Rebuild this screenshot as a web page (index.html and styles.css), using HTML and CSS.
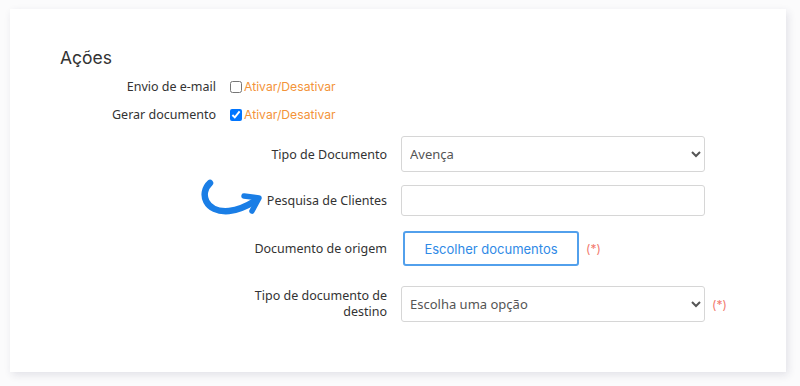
FILE: index.html
```html
<!DOCTYPE html>
<html lang="pt">
<head>
  <meta charset="UTF-8">
  <meta name="viewport" content="width=device-width, initial-scale=1.0">
  <title>Ações</title>
  <link rel="stylesheet" href="styles.css">
</head>
<body>

  <div class="card">
    <h2 class="section-title">Ações</h2>

    <!-- Opções de ativar/desativar -->
    <div class="toggles">
      <span class="label">Envio de e-mail</span>
      <label class="toggle"><input type="checkbox"> Ativar/Desativar</label>

      <span class="label">Gerar documento</span>
      <label class="toggle"><input type="checkbox" checked> Ativar/Desativar</label>
    </div>

    <!-- Campos do documento -->
    <div class="fields">
      <div class="row row-select">
        <span class="label">Tipo de Documento</span>
        <select class="control">
          <option>Avença</option>
        </select>
      </div>

      <div class="row row-search">
        <span class="label">
          <span class="hint">
            <svg class="arrow" width="70" height="42" viewBox="0 0 70 42">
              <path d="M13 6 C2 16 8 36 32 34 C42 33 50 29 58 24" fill="none" stroke="#1a7ee6" stroke-width="6.5" stroke-linecap="round"/>
              <path d="M47 19 L62 21 L55 34" fill="none" stroke="#1a7ee6" stroke-width="5.5" stroke-linecap="round" stroke-linejoin="round"/>
            </svg>
            Pesquisa de Clientes
          </span>
        </span>
        <input type="text" class="control input">
      </div>

      <div class="row row-button">
        <span class="label">Documento de origem</span>
        <div class="inline">
          <button class="choose-btn">Escolher documentos</button>
          <span class="required">(*)</span>
        </div>
      </div>

      <div class="row row-dest">
        <span class="label">Tipo de documento de<br>destino</span>
        <div class="inline">
          <select class="control">
            <option>Escolha uma opção</option>
          </select>
          <span class="required">(*)</span>
        </div>
      </div>
    </div>
  </div>

</body>
</html>
```

FILE: styles.css
```css
/* Estilos globais */
body {
  font-family: 'Noto Sans', sans-serif;
  background-color: #fbfbfc;
  color: #333;
  margin: 0;
  padding: 9px 14px 14px 10px;
}

.card {
  background-color: #fff;
  height: 363px;
  box-sizing: border-box;
  padding: 38px 0 0 50px;
  box-shadow: 2px 3px 8px rgba(40, 40, 80, 0.12);
}

.section-title {
  font-family: 'Inter', sans-serif;
  font-weight: 400;
  font-size: 17.5px;
  margin: 0 0 9px;
  line-height: 22px;
  color: #333;
}

.label {
  font-size: 12.5px;
  color: #333;
  text-align: right;
}

/* Ativar/Desativar */
.toggles {
  display: grid;
  grid-template-columns: 156px auto;
  column-gap: 14px;
  row-gap: 10px;
  align-items: center;
  justify-content: start;
}

.toggles .label {
  line-height: 18px;
}

.toggle {
  font-family: 'Inter', sans-serif;
  font-size: 12.2px;
  color: #f39339;
  display: flex;
  align-items: center;
  gap: 2px;
  line-height: 18px;
}

.toggle input {
  margin: 0;
  width: 12px;
  height: 12px;
}

/* Campos */
.fields {
  margin-top: 12px;
}

.row {
  display: grid;
  grid-template-columns: 327px auto;
  column-gap: 14px;
  align-items: center;
  justify-content: start;
}

.row-search {
  margin-top: 13px;
}

.row-button {
  margin-top: 15px;
}

.row-dest {
  margin-top: 20px;
}

.row-dest .label {
  line-height: 16px;
}

.control {
  width: 304px;
  height: 36px;
  box-sizing: border-box;
  border: 1px solid #d6d6d6;
  border-radius: 3px;
  background-color: #fff;
  font-family: 'Noto Sans', sans-serif;
  font-size: 13px;
  color: #555;
  padding: 0 4px;
}

.input {
  height: 31px;
}

.hint {
  position: relative;
}

.arrow {
  position: absolute;
  left: -70px;
  top: -15px;
}

.inline {
  display: flex;
  align-items: center;
  gap: 7px;
}

.row-button .inline {
  padding-left: 2px;
}

.choose-btn {
  width: 176px;
  height: 35px;
  background-color: #fff;
  border: 2px solid #52a0ec;
  border-radius: 3px;
  color: #2f8ae6;
  font-family: 'Inter', sans-serif;
  font-size: 13px;
  cursor: pointer;
}

.required {
  font-family: 'Inter', sans-serif;
  font-size: 12px;
  color: #f27a6e;
}
```
